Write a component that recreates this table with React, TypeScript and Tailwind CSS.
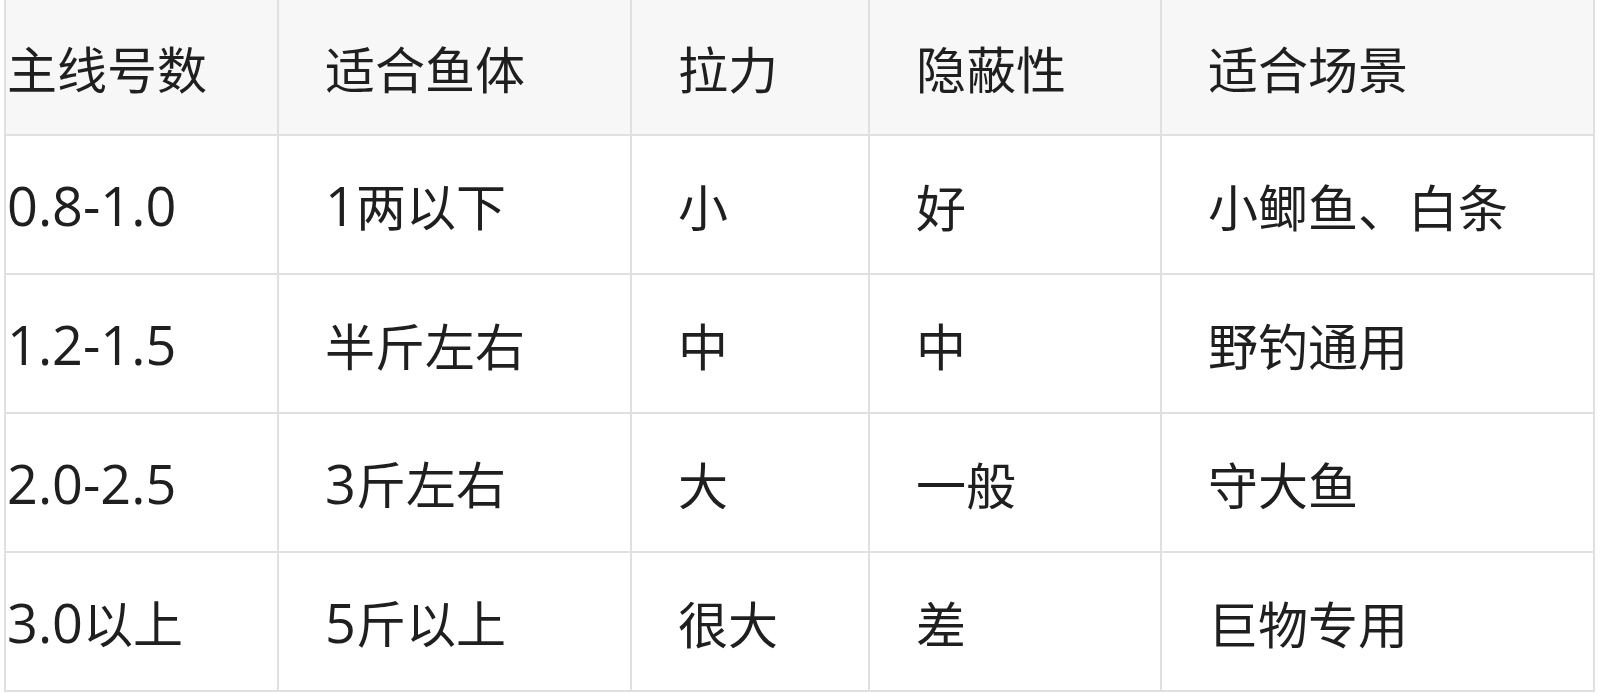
const header = ["主线号数", "适合鱼体", "拉力", "隐蔽性", "适合场景"];

const rows = [
  ["0.8-1.0", "1两以下", "小", "好", "小鲫鱼、白条"],
  ["1.2-1.5", "半斤左右", "中", "中", "野钓通用"],
  ["2.0-2.5", "3斤左右", "大", "一般", "守大鱼"],
  ["3.0以上", "5斤以上", "很大", "差", "巨物专用"],
];

const widths = ["w-[273px]", "w-[353px]", "w-[238px]", "w-[292px]", "w-[433px]"];

// digits in the shot are taller than the CJK font's own, so set them apart
function Cell({ text }: { text: string }) {
  return (
    <>
      {text.split(/([0-9.\-]+)/).map((part, i) =>
        /^[0-9.\-]+$/.test(part) ? (
          <span key={i} className="font-['Open_Sans'] text-[54px]">
            {part}
          </span>
        ) : (
          <span key={i}>{part}</span>
        )
      )}
    </>
  );
}

export default function App() {
  return (
    <div
      className="h-[694px] w-[1600px] overflow-hidden bg-white pl-[4px] text-[#1f1f1f]"
      style={{ fontFamily: '"Noto Sans CJK SC", "Noto Sans", sans-serif' }}
    >
      <table className="-mt-[2px] table-fixed border-collapse text-[50px] leading-none">
        <colgroup>
          {widths.map((w, i) => (
            <col key={i} className={w} />
          ))}
        </colgroup>
        <thead>
          <tr className="h-[136px] bg-[#f7f7f7]">
            {header.map((h, i) => (
              <th
                key={h}
                className={`border-2 border-[#e0e0e0] text-left font-normal ${i === 0 ? "pl-[1px]" : "pl-[46px]"}`}
              >
                {h}
              </th>
            ))}
          </tr>
        </thead>
        <tbody>
          {rows.map((r) => (
            <tr key={r[0]} className="h-[139px]">
              {r.map((c, i) => (
                <td
                  key={i}
                  className={`border-2 border-[#e0e0e0] ${i === 0 ? "pl-[1px]" : "pl-[46px]"}`}
                >
                  <Cell text={c} />
                </td>
              ))}
            </tr>
          ))}
        </tbody>
      </table>
    </div>
  );
}
